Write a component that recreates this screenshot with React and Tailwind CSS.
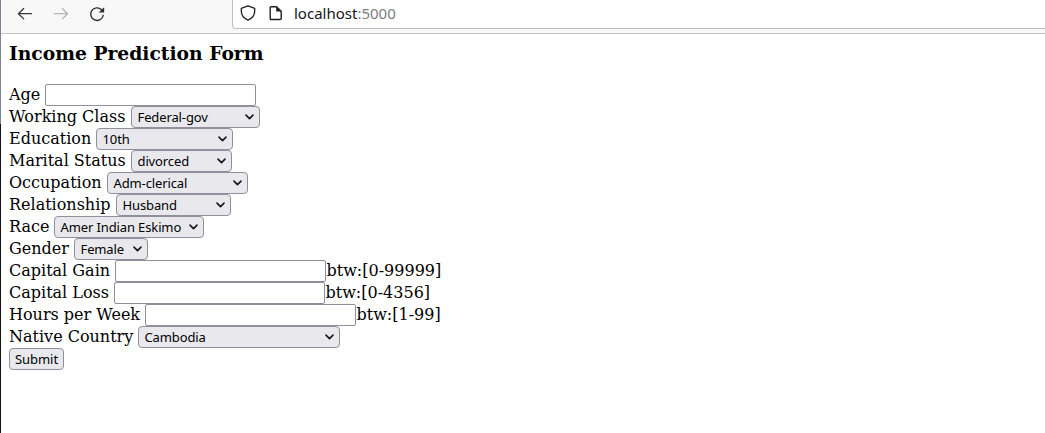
import React from "react";

const fields = [
  { label: "Age", type: "text", gap: "w-[36px]" },
  { label: "Working Class", value: "Federal-gov", gap: "w-[122px]", size: "w-[129px]" },
  { label: "Education", value: "10th", gap: "w-[87px]", size: "w-[137px]" },
  { label: "Marital Status", value: "divorced", gap: "w-[122px]", size: "w-[101px]" },
  { label: "Occupation", value: "Adm-clerical", gap: "w-[98px]", size: "w-[141px]" },
  { label: "Relationship", value: "Husband", gap: "w-[107px]", size: "w-[115px]" },
  { label: "Race", value: "Amer Indian Eskimo", gap: "w-[45px]", size: "w-[150px]" },
  { label: "Gender", value: "Female", gap: "w-[65px]", size: "w-[74px]" },
  { label: "Capital Gain", type: "text", gap: "w-[106px]", hint: "btw:[0-99999]" },
  { label: "Capital Loss", type: "text", gap: "w-[105px]", hint: "btw:[0-4356]" },
  { label: "Hours per Week", type: "text", gap: "w-[136px]", hint: "btw:[1-99]" },
  { label: "Native Country", value: "Cambodia", gap: "w-[129px]", size: "w-[202px]" },
];

function Toolbar() {
  return (
    <header className="flex h-[34px] shrink-0 border-b border-[#c4c4c8] bg-[#f8f8f8]">
      <div className="flex w-[231px] shrink-0 pl-[16px]">
        <svg className="mt-[6px] h-4 w-4" viewBox="0 0 16 16" fill="none" stroke="#38383b" strokeWidth="1.3" strokeLinecap="round" strokeLinejoin="round">
          <path d="M14.5 7.7H1.5M6.7 2.5 1.4 7.7 6.7 12.9" />
        </svg>
        <svg className="mt-[6px] ml-[20px] h-4 w-4" viewBox="0 0 16 16" fill="none" stroke="#b4b4b6" strokeWidth="1.3" strokeLinecap="round" strokeLinejoin="round">
          <path d="M1.5 7.7H14.5M9.3 2.5 14.6 7.7 9.3 12.9" />
        </svg>
        <svg className="mt-[6px] ml-[20px] h-4 w-4" viewBox="0 0 16 16" fill="none" stroke="#303033" strokeWidth="1.35" strokeLinecap="round">
          <path d="M12.4 3.6A6.3 6.3 0 1 0 14.2 9.3" />
          <path d="M15.2 1.2v5.2H9.6z" fill="#303033" stroke="none" />
        </svg>
      </div>
      <div className="flex h-[29px] grow rounded-bl-[4px] border-b border-l border-[#bdbdc1] bg-white pl-[7px]">
        <svg className="mt-[5px] h-4 w-4" viewBox="0 0 16 16" fill="none" stroke="#1e1e20" strokeWidth="1.3" strokeLinejoin="round">
          <path d="M8 .8 1.3 3.3v2.8c0 4.2 2.6 7.4 6.7 9.1 4.1-1.7 6.7-4.9 6.7-9.1V3.3z" />
        </svg>
        <svg className="mt-[5px] ml-[12px] h-4 w-4" viewBox="0 0 16 16" fill="none" stroke="#1e1e20" strokeWidth="1.4" strokeLinejoin="round">
          <path d="M3.2 1.7h5.3l4.7 4.6v7.2a1 1 0 0 1-1 1H3.2a1 1 0 0 1-1-1V2.7a1 1 0 0 1 1-1z" />
          <path d="M8.2 1.2v5.4h5.4z" fill="#1e1e20" stroke="none" />
        </svg>
        <span className="ml-[10px] h-[28px] font-['Noto_Sans','Open_Sans',sans-serif] text-[15px] leading-[27px] text-[#15141a]">
          localhost<span className="text-[#7c7c80]">:5000</span>
        </span>
      </div>
    </header>
  );
}

function Select({ value, size }) {
  return (
    <div className={"flex h-[22px] shrink-0 items-center justify-between rounded-[4px] border border-[#8f8f9d] bg-[#e9e9ed] pr-[5.5px] pl-[5.5px] " + size}>
      <span className="font-['Noto_Sans','Open_Sans',sans-serif] text-[13px] leading-[20px] tracking-[-0.12px] whitespace-nowrap text-black">{value}</span>
      <svg className="h-[6px] w-[9px] shrink-0" viewBox="0 0 9 6" fill="none" stroke="#18181b" strokeWidth="1.6" strokeLinecap="round" strokeLinejoin="round">
        <path d="M1 1.1 4.5 4.6 8 1.1" />
      </svg>
    </div>
  );
}

export default function App() {
  return (
    <div className="flex h-[433px] w-full overflow-hidden bg-white">
      <div className="flex w-px shrink-0 flex-col">
        <div className="h-[124px] bg-[#7b8496]" />
        <div className="grow bg-[#15120f]" />
      </div>
      <div className="flex min-w-0 grow flex-col">
        <Toolbar />
        <main className="pl-[8px] font-['DejaVu_Serif',serif] text-[16px] text-black">
          <h3 className="mt-[8px] mb-[20px] h-[22px] text-[18.72px] leading-[22px] font-bold">Income Prediction Form</h3>
          <form>
            {fields.map((f) => (
              <div key={f.label} className="flex h-[22px] leading-[22px] whitespace-nowrap">
                <label className={"shrink-0 " + f.gap}>{f.label}</label>
                {f.type === "text" ? (
                  <input type="text" aria-label={f.label} className="h-[22px] w-[211px] shrink-0 rounded-[2px] border border-[#8f8f9d] bg-white px-1 outline-none" />
                ) : (
                  <Select value={f.value} size={f.size} />
                )}
                {f.hint && <span className="pl-[0.5px]">{f.hint}</span>}
              </div>
            ))}
            <button type="button" className="block h-[22px] w-[55px] rounded-[4px] border border-[#8f8f9d] bg-[#e9e9ed] text-center font-['Noto_Sans','Open_Sans',sans-serif] text-[13px] leading-[20px] tracking-[-0.05px] text-black">
              Submit
            </button>
          </form>
        </main>
      </div>
    </div>
  );
}
